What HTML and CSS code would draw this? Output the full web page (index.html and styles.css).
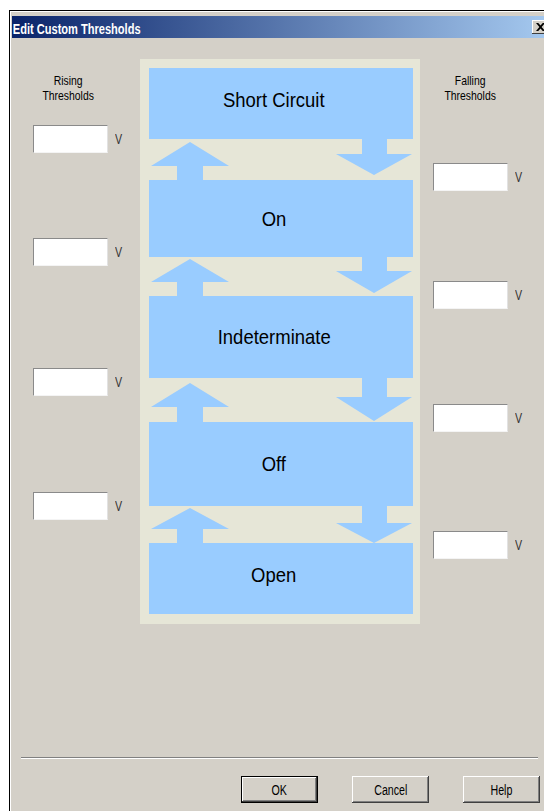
FILE: index.html
```html
<!DOCTYPE html>
<html>
<head>
  <title>Edit Custom Thresholds</title>
  <link rel="stylesheet" href="styles.css">
</head>
<body>
  <div class="window">
    <div class="titlebar">
      <span class="title">Edit Custom Thresholds</span>
      <span class="close-btn">
        <svg width="9" height="8" viewBox="0 0 8 7"><path d="M0 0h2l2 2.2L6 0h2L5 3.5 8 7H6L4 4.8 2 7H0l3-3.5z" fill="#000"/></svg>
      </span>
    </div>

    <div class="main">
      <!-- rising thresholds, one box per upward transition -->
      <div class="column rising">
        <div class="col-label"><span>Rising<br>Thresholds</span></div>
        <div class="field"><input type="text"><span class="unit">V</span></div>
        <div class="field"><input type="text"><span class="unit">V</span></div>
        <div class="field"><input type="text"><span class="unit">V</span></div>
        <div class="field"><input type="text"><span class="unit">V</span></div>
      </div>

      <div class="states">
        <div class="state short lift"><span>Short Circuit</span></div>
        <div class="transition">
          <svg width="264" height="41" viewBox="0 0 264 41">
            <polygon points="28,41 28,27 2,27 41,3 80,27 54,27 54,41" fill="#99ccff"/>
            <polygon points="213,0 238,0 238,15 263,15 225,36 187,15 213,15" fill="#99ccff"/>
          </svg>
        </div>
        <div class="state on"><span>On</span></div>
        <div class="transition">
          <svg width="264" height="39" viewBox="0 0 264 39">
            <polygon points="28,39 28,25 2,25 41,2 80,25 54,25 54,39" fill="#99ccff"/>
            <polygon points="213,0 238,0 238,14 263,14 225,36 187,14 213,14" fill="#99ccff"/>
          </svg>
        </div>
        <div class="state indet"><span>Indeterminate</span></div>
        <div class="transition">
          <svg width="264" height="44" viewBox="0 0 264 44">
            <polygon points="28,44 28,29 2,29 41,5 80,29 54,29 54,44" fill="#99ccff"/>
            <polygon points="213,0 238,0 238,19 263,19 225,43 187,19 213,19" fill="#99ccff"/>
          </svg>
        </div>
        <div class="state off"><span>Off</span></div>
        <div class="transition">
          <svg width="264" height="37" viewBox="0 0 264 37">
            <polygon points="28,37 28,23 2,23 41,2 80,23 54,23 54,37" fill="#99ccff"/>
            <polygon points="213,0 238,0 238,17 263,17 225,37 187,17 213,17" fill="#99ccff"/>
          </svg>
        </div>
        <div class="state open lift"><span>Open</span></div>
      </div>

      <!-- falling thresholds -->
      <div class="column falling">
        <div class="col-label"><span>Falling<br>Thresholds</span></div>
        <div class="field"><input type="text"><span class="unit">V</span></div>
        <div class="field"><input type="text"><span class="unit">V</span></div>
        <div class="field"><input type="text"><span class="unit">V</span></div>
        <div class="field"><input type="text"><span class="unit">V</span></div>
      </div>
    </div>

    <div class="separator"></div>

    <div class="buttons">
      <button type="button" class="btn default"><span>OK</span></button>
      <button type="button" class="btn"><span>Cancel</span></button>
      <button type="button" class="btn"><span>Help</span></button>
    </div>
  </div>
</body>
</html>
```

FILE: styles.css
```css
html, body {
  margin: 0;
  overflow: hidden;
  background: #fff;
}

body {
  font-family: "Liberation Sans", Arial, sans-serif;
  color: #000;
}

.window {
  margin: 10px 0 0 9px;
  width: 542px;
  height: 820px;
  box-sizing: border-box;
  border-top: 1px solid #000;
  border-left: 1px solid #000;
  background: #d4d0c8;
  box-shadow: inset 1px 1px #fff;
  padding: 5px 0 0 2px;
}

.titlebar {
  height: 22px;
  display: flex;
  align-items: center;
  background: linear-gradient(to right, #0a246a, #a6caf0);
}

.title {
  color: #fff;
  font-weight: bold;
  font-size: 14px;
  white-space: nowrap;
  padding: 4px 0 0 1px;
  transform: scaleX(0.79);
  transform-origin: left center;
}

.close-btn {
  margin-left: auto;
  margin-right: 3px;
  width: 16px;
  height: 14px;
  display: flex;
  align-items: center;
  justify-content: center;
  background: #d4d0c8;
  box-shadow: inset -1px -1px #404040, inset 1px 1px #fff;
}

.main {
  display: flex;
  align-items: flex-start;
}

.column {
  display: flex;
  flex-direction: column;
  padding-top: 35px;
  font-size: 14px;
}

.rising {
  width: 128px;
  box-sizing: border-box;
  padding-left: 21px;
}

.falling {
  padding-left: 13px;
}

.col-label {
  width: 75px;
  height: 28px;
  text-align: center;
  font-size: 13px;
  line-height: 15px;
}

.rising .col-label {
  width: 70px;
}

.col-label span {
  display: inline-block;
  transform: scaleX(0.8);
}

.unit,
.btn span {
  display: inline-block;
  transform: scaleX(0.76);
}

.field {
  display: flex;
  align-items: center;
  gap: 6px;
}

.field input {
  width: 75px;
  height: 28px;
  box-sizing: border-box;
  margin: 0;
  padding: 0 3px;
  background: #fff;
  border: 1px solid;
  border-color: #8a8a8a #e2e2e2 #f4f4f4 #8a8a8a;
}

.unit {
  color: #333;
}

.rising .field:nth-child(2) { margin-top: 24px; }
.rising .field:nth-child(3) { margin-top: 85px; }
.rising .field:nth-child(4) { margin-top: 102px; }
.rising .field:nth-child(5) { margin-top: 96px; }

.falling .field:nth-child(2) { margin-top: 62px; }
.falling .field:nth-child(3) { margin-top: 90px; }
.falling .field:nth-child(4) { margin-top: 95px; }
.falling .field:nth-child(5) { margin-top: 99px; }

.states {
  margin-top: 21px;
  width: 280px;
  box-sizing: border-box;
  padding: 9px 7px 10px 9px;
  background: #e6e6d7;
  display: flex;
  flex-direction: column;
}

.state {
  background: #99ccff;
  display: flex;
  align-items: center;
  justify-content: center;
  box-sizing: border-box;
  padding-right: 14px;
  font-size: 21px;
}

.state span {
  display: inline-block;
  transform: scaleX(0.88);
}

.state.lift {
  padding-bottom: 8px;
}

.short { height: 71px; }
.on { height: 77px; }
.indet { height: 82px; }
.off { height: 84px; }
.open { height: 71px; }

.transition svg {
  display: block;
}

.separator {
  margin: 133px 13px 0 9px;
  border-top: 1px solid #808080;
  border-bottom: 1px solid #fff;
}

.buttons {
  display: flex;
  gap: 34px;
  margin-top: 17px;
  padding-left: 229px;
}

.btn {
  width: 77px;
  height: 27px;
  box-sizing: border-box;
  padding: 0;
  border: none;
  background: #d4d0c8;
  font-family: "Liberation Sans", Arial, sans-serif;
  font-size: 14px;
  color: #000;
  box-shadow: inset -1px -1px #404040, inset 1px 1px #fff, inset -2px -2px #808080;
}

.btn.default {
  border: 1px solid #000;
}
```
